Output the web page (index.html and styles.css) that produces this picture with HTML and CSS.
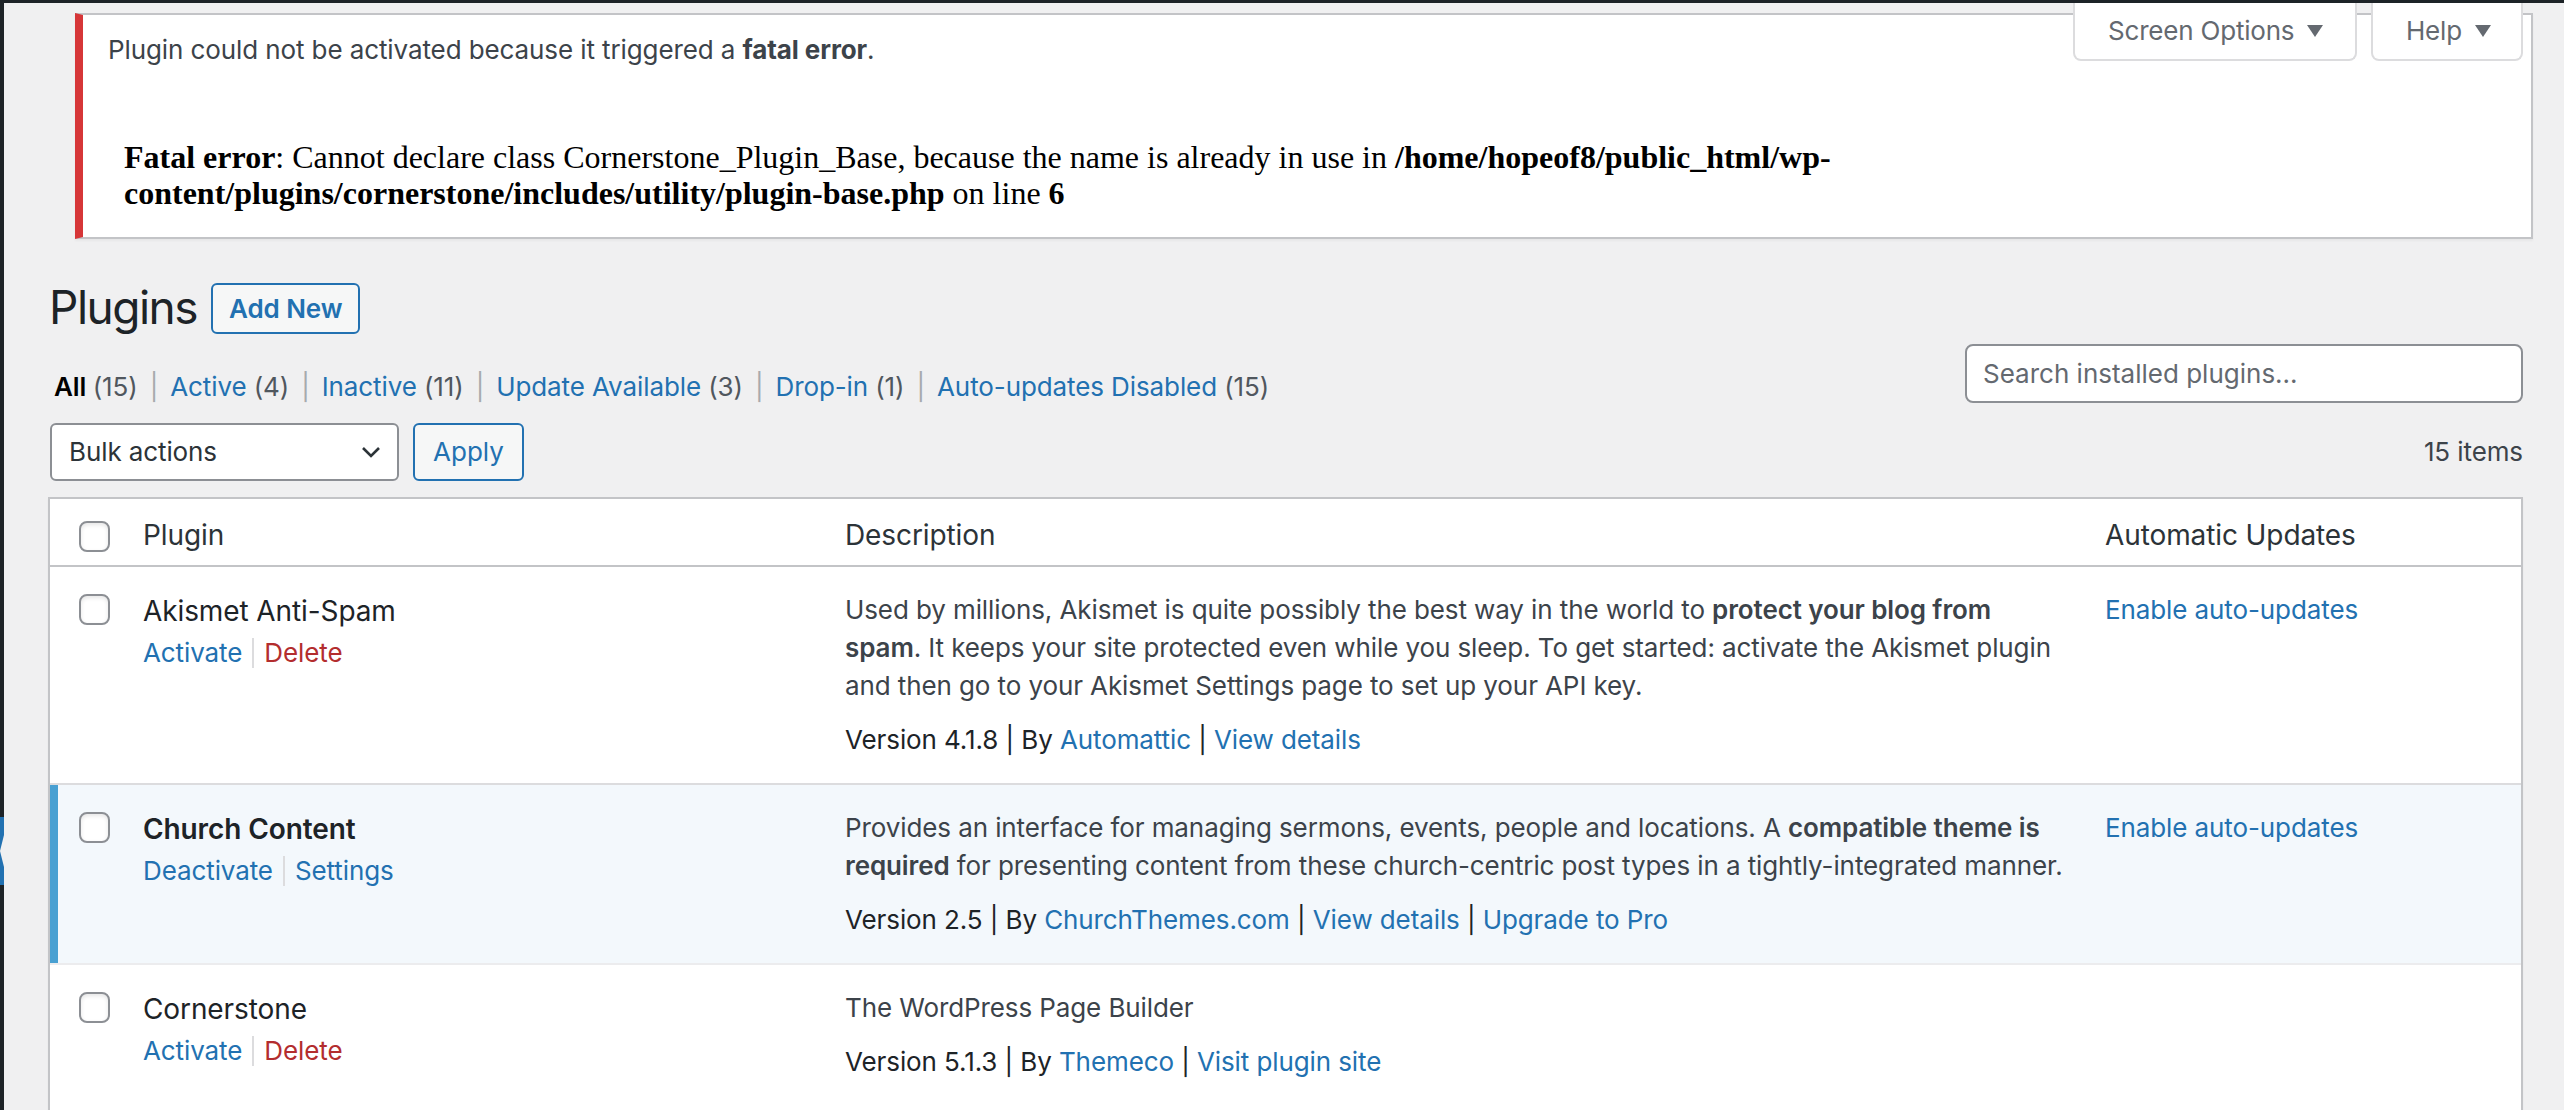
FILE: index.html
```html
<!DOCTYPE html>
<html lang="en">
<head>
<meta charset="utf-8">
<title>Plugins</title>
<link rel="stylesheet" href="styles.css">
</head>
<body>
<div class="admin-bar"></div>
<div class="layout">
  <div class="menu-edge">
    <div class="menu-dark"></div>
    <div class="menu-current"><span class="menu-arrow"></span></div>
    <div class="menu-dark grow"></div>
  </div>

  <main class="content">
    <div class="screen-meta-links">
      <button class="meta-tab tab-options">Screen Options <span class="caret"></span></button>
      <button class="meta-tab tab-help">Help <span class="caret"></span></button>
    </div>

    <div class="notice notice-error">
      <p>Plugin could not be activated because it triggered a <strong>fatal error</strong>.</p>
      <div class="fatal-frame">
        <br>
        <b>Fatal error</b>: Cannot declare class Cornerstone_Plugin_Base, because the name is already in use in <b>/home/hopeof8/public_html/wp-content/plugins/cornerstone/includes/utility/plugin-base.php</b> on line <b>6</b>
      </div>
    </div>

    <div class="wrap">
      <div class="page-title">
        <h1>Plugins</h1>
        <a class="title-action" href="#">Add New</a>
      </div>

      <div class="filter-bar">
        <ul class="subsubsub">
          <li><a class="current" href="#">All <span class="count">(15)</span></a><span class="sep">|</span></li>
          <li><a href="#">Active <span class="count">(4)</span></a><span class="sep">|</span></li>
          <li><a href="#">Inactive <span class="count">(11)</span></a><span class="sep">|</span></li>
          <li><a href="#">Update Available <span class="count">(3)</span></a><span class="sep">|</span></li>
          <li><a href="#">Drop-in <span class="count">(1)</span></a><span class="sep">|</span></li>
          <li><a href="#">Auto-updates Disabled <span class="count">(15)</span></a></li>
        </ul>
        <div class="search-box">
          <input type="search" class="search-input" placeholder="Search installed plugins...">
        </div>
      </div>

      <div class="tablenav">
        <div class="bulk-select">
          <span>Bulk actions</span>
          <svg class="chevron" width="20" height="14" viewBox="0 0 20 14"><path d="M2 3 L10 11 L18 3" fill="none" stroke="#2c3338" stroke-width="2.6"/></svg>
        </div>
        <button class="button">Apply</button>
        <span class="displaying-num">15 items</span>
      </div>

      <div class="plugins-table">
        <div class="trow thead">
          <div class="cell check"><span class="checkbox"></span></div>
          <div class="cell">Plugin</div>
          <div class="cell">Description</div>
          <div class="cell">Automatic Updates</div>
        </div>

        <div class="trow">
          <div class="cell check"><span class="checkbox"></span></div>
          <div class="cell plugin-title">
            <strong>Akismet Anti-Spam</strong>
            <div class="row-actions"><a href="#">Activate</a><span class="bar"></span><a class="delete" href="#">Delete</a></div>
          </div>
          <div class="cell desc">
            <p>Used by millions, Akismet is quite possibly the best way in the world to <strong>protect your blog from spam</strong>. It keeps your site protected even while you sleep. To get started: activate the Akismet plugin and then go to your Akismet Settings page to set up your API key.</p>
            <div class="meta">Version 4.1.8 | By <a href="#">Automattic</a> | <a href="#">View details</a></div>
          </div>
          <div class="cell auto"><a href="#">Enable auto-updates</a></div>
        </div>

        <div class="trow active">
          <div class="cell check"><span class="checkbox"></span></div>
          <div class="cell plugin-title">
            <strong>Church Content</strong>
            <div class="row-actions"><a href="#">Deactivate</a><span class="bar"></span><a href="#">Settings</a></div>
          </div>
          <div class="cell desc">
            <p>Provides an interface for managing sermons, events, people and locations. A <strong>compatible theme is required</strong> for presenting content from these church-centric post types in a tightly-integrated manner.</p>
            <div class="meta">Version 2.5 | By <a href="#">ChurchThemes.com</a> | <a href="#">View details</a> | <a href="#">Upgrade to Pro</a></div>
          </div>
          <div class="cell auto"><a href="#">Enable auto-updates</a></div>
        </div>

        <div class="trow after-active last">
          <div class="cell check"><span class="checkbox"></span></div>
          <div class="cell plugin-title">
            <strong>Cornerstone</strong>
            <div class="row-actions"><a href="#">Activate</a><span class="bar"></span><a class="delete" href="#">Delete</a></div>
          </div>
          <div class="cell desc">
            <p>The WordPress Page Builder</p>
            <div class="meta">Version 5.1.3 | By <a href="#">Themeco</a> | <a href="#">Visit plugin site</a></div>
          </div>
          <div class="cell auto"></div>
        </div>
      </div>
    </div>
  </main>
</div>
</body>
</html>
```

FILE: styles.css
```css
* { box-sizing: border-box; }

html, body { margin: 0; padding: 0; }

body {
  width: 2564px;
  height: 1110px;
  overflow: hidden;
  background: #f0f0f1;
  color: #3c434a;
  font-family: Inter, "Noto Sans", "Liberation Sans", sans-serif;
  font-size: 26px;
  letter-spacing: -0.1px;
  line-height: 1.4;
}

a { color: #2271b1; text-decoration: none; }

/* top toolbar edge and admin menu edge */
.admin-bar { height: 3px; background: #1d2327; }

.layout { display: flex; }

.menu-edge {
  width: 4px;
  height: 1107px;
  display: flex;
  flex-direction: column;
}
.menu-dark { background: #1d2327; height: 814px; }
.menu-dark.grow { flex: 1; height: auto; }
.menu-current { position: relative; height: 68px; background: #2271b1; }
.menu-arrow {
  position: absolute;
  right: 0;
  top: 18px;
  width: 0;
  height: 0;
  border-top: 16px solid transparent;
  border-bottom: 16px solid transparent;
  border-right: 4px solid #f0f0f1;
}

.content {
  flex: 1;
  position: relative;
  padding: 10px 31px 0 44px;
}

/* Screen Options / Help tabs */
.screen-meta-links {
  position: absolute;
  top: 0;
  right: 41px;
  display: flex;
  gap: 14px;
  z-index: 2;
}
.meta-tab {
  height: 58px;
  background: #fff;
  border: 2px solid #dcdcde;
  border-top: 0;
  border-radius: 0 0 8px 8px;
  font: inherit;
  font-size: 26px;
  letter-spacing: -0.2px;
  color: #646970;
  display: flex;
  align-items: center;
  white-space: nowrap;
  padding: 0 0 0 33px;
}
.tab-options { width: 284px; }
.tab-help { width: 152px; }
.caret {
  display: inline-block;
  margin-left: 13px;
  width: 0;
  height: 0;
  border-left: 8px solid transparent;
  border-right: 8px solid transparent;
  border-top: 12px solid #646970;
}

/* error notice */
.notice {
  margin: 0 0 0 27px;
  background: #fff;
  border: 2px solid #c3c4c7;
  border-left: 8px solid #d63638;
  box-shadow: 0 2px 2px rgba(0, 0, 0, 0.04);
  padding: 2px 24px 2px 25px;
}
.notice p {
  margin: 13px 0;
  line-height: 39px;
  color: #3c434a;
}
.fatal-frame {
  width: 1800px;
  height: 140px;
  margin-bottom: 13px;
  padding: 21px 16px 16px;
  font-family: "Liberation Serif", "Times New Roman", serif;
  font-size: 32px;
  letter-spacing: 0;
  line-height: 36px;
  color: #000;
}

/* page body */
.wrap { margin-right: 10px; }

.page-title {
  display: flex;
  align-items: flex-start;
  margin-top: 20px;
}
.page-title h1 {
  margin: 0;
  padding: 18px 0 8px 1px;
  font-size: 46px;
  font-weight: 400;
  letter-spacing: -1.5px;
  line-height: 60px;
  color: #1d2327;
}
.title-action {
  margin: 24px 0 0 14px;
  padding: 8px 16px;
  border: 2px solid #2271b1;
  border-radius: 6px;
  background: #f6f7f7;
  font-size: 26px;
  font-weight: 600;
  line-height: 31px;
}

.filter-bar {
  display: flex;
  justify-content: space-between;
  align-items: flex-start;
  height: 68px;
}
.subsubsub {
  display: flex;
  list-style: none;
  margin: 16px 0 0 6px;
  padding: 0;
  line-height: 52px;
  color: #50575e;
}
.subsubsub a.current { color: #000; font-weight: 600; }
.subsubsub .count { color: #50575e; font-weight: 400; }
.subsubsub .sep { color: #a7aaad; margin: 0 12px; }

.search-input {
  width: 558px;
  height: 59px;
  margin-top: -1px;
  border: 2px solid #8c8f94;
  border-radius: 8px;
  background: #fff;
  padding: 0 16px;
  font: inherit;
  font-size: 26px;
  color: #2c3338;
}
.search-input::placeholder { color: #646970; }

.tablenav {
  display: flex;
  align-items: center;
  height: 58px;
  margin-top: 10px;
}
.bulk-select {
  width: 349px;
  height: 58px;
  margin-left: 2px;
  border: 2px solid #8c8f94;
  border-radius: 6px;
  background: #fff;
  display: flex;
  align-items: center;
  justify-content: space-between;
  padding: 0 16px 0 17px;
  color: #2c3338;
}
.button {
  margin-left: 14px;
  width: 111px;
  height: 58px;
  border: 2px solid #2271b1;
  border-radius: 6px;
  background: #f6f7f7;
  color: #2271b1;
  font: inherit;
  font-size: 26px;
}
.displaying-num { margin-left: auto; color: #3c434a; }

/* plugin list table */
.plugins-table {
  margin-top: 16px;
  background: #fff;
  border: 2px solid #c3c4c7;
  border-bottom: 0;
  box-shadow: 0 2px 2px rgba(0, 0, 0, 0.04);
}
.trow {
  display: grid;
  grid-template-columns: 73px 702px 1260px 1fr;
  border-bottom: 2px solid #dcdcde;
}
.cell {
  padding: 24px 20px 24px;
  line-height: 38px;
}
.cell.desc { padding-right: 16px; }
.cell.check { padding: 27px 0 0 29px; }
.plugin-title { padding-top: 25px; }
.trow.last .cell { padding-bottom: 40px; }

.thead { border-bottom-color: #c3c4c7; }
.thead .cell {
  padding: 17px 20px 11px;
  font-size: 28px;
  color: #2c3338;
}
.thead .cell.check { padding: 22px 0 0 29px; }

.checkbox {
  display: block;
  width: 31px;
  height: 31px;
  border: 2px solid #8c8f94;
  border-radius: 8px;
  background: #fff;
  box-shadow: inset 0 2px 4px rgba(0, 0, 0, 0.1);
}

.plugin-title strong {
  display: block;
  font-size: 28px;
  font-weight: 400;
  color: #1d2327;
}
.trow.active .plugin-title strong { font-weight: 600; }
.row-actions { padding-top: 4px; display: flex; align-items: center; }
.row-actions .bar {
  width: 2px;
  height: 30px;
  margin: 0 10px;
  background: #dcdcde;
}
.row-actions .delete { color: #b32d2e; }

.desc p { margin: 0 0 16px; color: #3c434a; }
.desc p strong { font-weight: 600; }
.desc .meta { color: #1d2327; }

.trow.active {
  background: #f3f8fc;
  box-shadow: inset 8px 0 0 #48a0d2;
}
.trow.after-active { border-top: 2px solid #ececee; margin-top: -2px; }
```
